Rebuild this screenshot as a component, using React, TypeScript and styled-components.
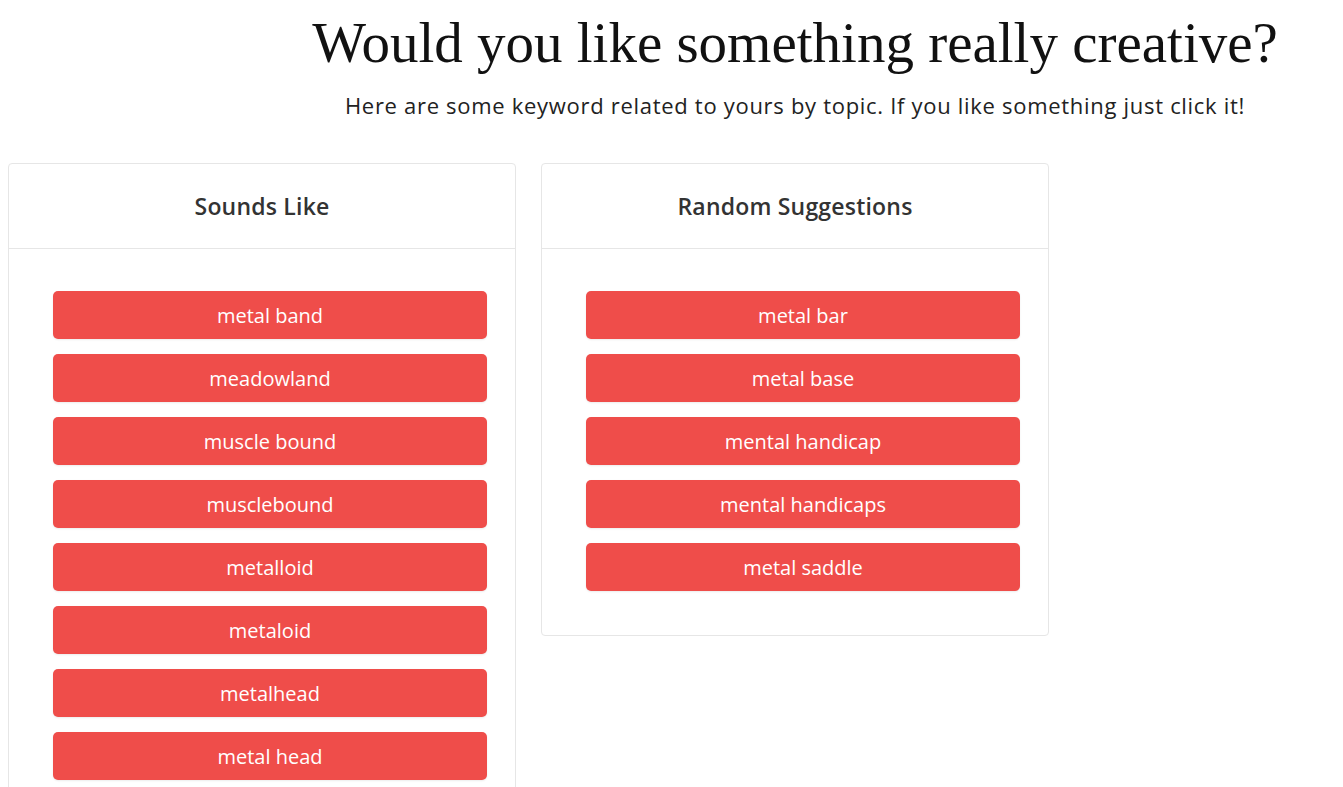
import styled, { createGlobalStyle } from "styled-components";

const GlobalStyle = createGlobalStyle`
  body {
    margin: 0;
    background: #ffffff;
    font-family: "Open Sans", "Noto Sans", sans-serif;
  }
`;

const Page = styled.div`
  width: 1343px;
  height: 787px;
  overflow: hidden;
`;

const Intro = styled.header`
  margin-left: 247px;
  padding-top: 10px;
  text-align: center;
`;

const Title = styled.h1`
  margin: 0;
  font-family: "Liberation Serif", serif;
  font-weight: 400;
  font-size: 57px;
  line-height: 66px;
  color: #111;
`;

const Subtitle = styled.p`
  margin: 14px 0 0;
  font-size: 22px;
  letter-spacing: 0.7px;
  line-height: 30px;
  color: #222;
`;

const Columns = styled.div`
  display: flex;
  align-items: flex-start;
  gap: 25px;
  padding: 43px 0 0 8px;
`;

const Card = styled.section`
  width: 508px;
  box-sizing: border-box;
  border: 1px solid #e6e6e6;
  border-radius: 4px;
  background: #fff;
`;

const CardHeader = styled.h2`
  margin: 0;
  height: 84px;
  display: flex;
  align-items: center;
  justify-content: center;
  border-bottom: 1px solid #e6e6e6;
  font-size: 23px;
  font-weight: 600;
  letter-spacing: 0.2px;
  color: #333;
`;

const CardBody = styled.div`
  display: flex;
  flex-direction: column;
  gap: 15px;
  padding: 42px 28px 44px 44px;
`;

const KeywordButton = styled.button`
  height: 48px;
  border: none;
  border-radius: 5px;
  background: #ef4d4a;
  color: #fff;
  font-family: "Open Sans", "Noto Sans", sans-serif;
  font-size: 20px;
  cursor: pointer;
  box-shadow: 0 1px 2px rgba(0, 0, 0, 0.08);
`;

const columns = [
  {
    title: "Sounds Like",
    words: ["metal band", "meadowland", "muscle bound", "musclebound", "metalloid", "metaloid", "metalhead", "metal head"],
  },
  {
    title: "Random Suggestions",
    words: ["metal bar", "metal base", "mental handicap", "mental handicaps", "metal saddle"],
  },
];

export default function App() {
  return (
    <Page>
      <GlobalStyle />
      <Intro>
        <Title>Would you like something really creative?</Title>
        <Subtitle>Here are some keyword related to yours by topic. If you like something just click it!</Subtitle>
      </Intro>
      <Columns>
        {columns.map((col) => (
          <Card key={col.title}>
            <CardHeader>{col.title}</CardHeader>
            <CardBody>
              {col.words.map((w) => (
                <KeywordButton key={w}>{w}</KeywordButton>
              ))}
            </CardBody>
          </Card>
        ))}
      </Columns>
    </Page>
  );
}
